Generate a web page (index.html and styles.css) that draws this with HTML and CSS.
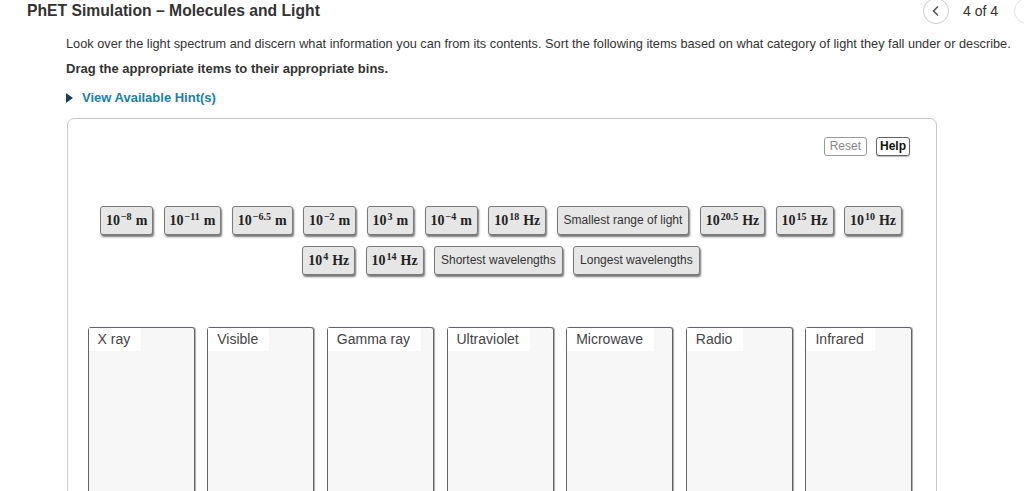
FILE: index.html
```html
<!DOCTYPE html>
<html>
<head>
<meta charset="utf-8">
<link rel="stylesheet" href="styles.css">
</head>
<body>
<header class="header">
  <h1 class="title">PhET Simulation – Molecules and Light</h1>
  <nav class="pager">
    <span class="circle"><svg width="12" height="12" viewBox="0 0 12 12"><path d="M8 1.5 L3.5 6 L8 10.5" fill="none" stroke="#555" stroke-width="1.6"/></svg></span>
    <span class="count">4 of 4</span>
    <span class="circle faded"><svg width="12" height="12" viewBox="0 0 12 12"><path d="M4 1.5 L8.5 6 L4 10.5" fill="none" stroke="#bbb" stroke-width="1.6"/></svg></span>
  </nav>
</header>
<main class="content">
  <p class="intro">Look over the light spectrum and discern what information you can from its contents. Sort the following items based on what category of light they fall under or describe.</p>
  <p class="instr">Drag the appropriate items to their appropriate bins.</p>
  <p class="hint"><span class="tri"></span>View Available Hint(s)</p>
  <section class="board">
    <div class="tools">
      <button class="btn reset">Reset</button>
      <button class="btn help">Help</button>
    </div>
    <div class="tiles">
      <div class="row">
        <span class="tile math">10<sup>−8</sup>m</span>
        <span class="tile math">10<sup>−11</sup>m</span>
        <span class="tile math">10<sup>−6.5</sup>m</span>
        <span class="tile math">10<sup>−2</sup>m</span>
        <span class="tile math">10<sup>3</sup>m</span>
        <span class="tile math">10<sup>−4</sup>m</span>
        <span class="tile math">10<sup>18</sup>Hz</span>
        <span class="tile text">Smallest range of light</span>
        <span class="tile math">10<sup>20.5</sup>Hz</span>
        <span class="tile math">10<sup>15</sup>Hz</span>
        <span class="tile math">10<sup>10</sup>Hz</span>
      </div>
      <div class="row">
        <span class="tile math">10<sup>4</sup>Hz</span>
        <span class="tile math">10<sup>14</sup>Hz</span>
        <span class="tile text">Shortest wavelengths</span>
        <span class="tile text">Longest wavelengths</span>
      </div>
    </div>
    <div class="bins">
      <div class="bin"><span class="label">X ray</span></div>
      <div class="bin"><span class="label">Visible</span></div>
      <div class="bin"><span class="label">Gamma ray</span></div>
      <div class="bin"><span class="label">Ultraviolet</span></div>
      <div class="bin"><span class="label">Microwave</span></div>
      <div class="bin"><span class="label">Radio</span></div>
      <div class="bin"><span class="label">Infrared</span></div>
    </div>
  </section>
</main>
</body>
</html>
```

FILE: styles.css
```css
* { box-sizing: border-box; }
html, body { margin: 0; padding: 0; }
body {
  width: 1024px;
  height: 491px;
  overflow: hidden;
  background: #fff;
  font-family: "Liberation Sans", Arial, sans-serif;
  color: #333;
}
.header {
  display: flex;
  align-items: center;
  height: 22px;
  padding-left: 27px;
}
.title {
  margin: 0;
  font-size: 15.7px;
  font-weight: bold;
  color: #333;
  line-height: 22px;
}
.pager {
  margin-left: auto;
  margin-right: -16px;
  display: flex;
  align-items: center;
}
.circle {
  width: 26px;
  height: 26px;
  border: 1px solid #ccc;
  border-radius: 50%;
  display: flex;
  align-items: center;
  justify-content: center;
}
.circle.faded { border-color: #e4e4e4; }
.count {
  font-size: 14px;
  color: #333;
  margin: 0 16px 0 14px;
}
.content {
  padding-left: 66px;
}
.intro {
  margin: 14px 0 0;
  font-size: 12.75px;
  line-height: 16px;
  white-space: nowrap;
}
.instr {
  margin: 9px 0 0;
  font-size: 13px;
  line-height: 16px;
  font-weight: bold;
}
.hint {
  margin: 13px 0 0;
  font-size: 13px;
  line-height: 16px;
  font-weight: bold;
  color: #1c7fa3;
  display: flex;
  align-items: center;
}
.tri {
  width: 0;
  height: 0;
  border-left: 7px solid #1d3f5c;
  border-top: 5px solid transparent;
  border-bottom: 5px solid transparent;
  margin-right: 9px;
}
.board {
  margin-top: 12px;
  margin-left: 1px;
  width: 870px;
  height: 400px;
  border: 1px solid #c8c8c8;
  border-radius: 7px;
}
.tools {
  display: flex;
  justify-content: flex-end;
  gap: 9px;
  padding: 18px 26px 0 0;
}
.btn {
  font-family: "Liberation Sans", Arial, sans-serif;
  font-size: 12px;
  height: 19px;
  padding: 0 4px;
  background: #fff;
  border: 1px solid #999;
  border-radius: 3px;
  line-height: 17px;
}
.reset { color: #888; padding: 0 5px; }
.help { color: #111; font-weight: bold; border-color: #666; box-shadow: 0 1px 1px #bbb; padding: 0 3px; }
.tiles {
  margin-top: 50px;
  padding-right: 2px;
  display: flex;
  flex-direction: column;
  align-items: center;
  gap: 11px;
}
.row {
  display: flex;
  justify-content: center;
  align-items: flex-start;
  gap: 10.3px;
}
.tile {
  display: block;
  height: 29px;
  line-height: 27px;
  padding: 0 7px;
  background: #e6e6e6;
  border: 1px solid #7a7a7a;
  border-radius: 3px;
  box-shadow: 1px 2px 2px #777;
  white-space: nowrap;
}
.math {
  font-family: "Liberation Serif", "Times New Roman", serif;
  font-weight: bold;
  font-size: 14px;
  color: #222;
  padding: 0 5px;
}
.math sup {
  font-size: 10px;
  line-height: 0;
  vertical-align: 5px;
  margin: 0 4px 0 1px;
}
.text {
  font-size: 12px;
  color: #333;
  padding: 0 6px;
}
.bins {
  margin-top: 52px;
  padding-right: 4px;
  display: flex;
  justify-content: center;
  gap: 12.67px;
}
.bin {
  width: 107px;
  height: 200px;
  background: #f7f7f7;
  border: 1px solid #63636a;
  border-radius: 3px;
  box-shadow: 1px 0 1px #aaa;
}
.label {
  display: inline-block;
  background: #fff;
  font-size: 14px;
  color: #444;
  height: 23px;
  line-height: 23px;
  padding: 0 11px 0 9px;
}
```
